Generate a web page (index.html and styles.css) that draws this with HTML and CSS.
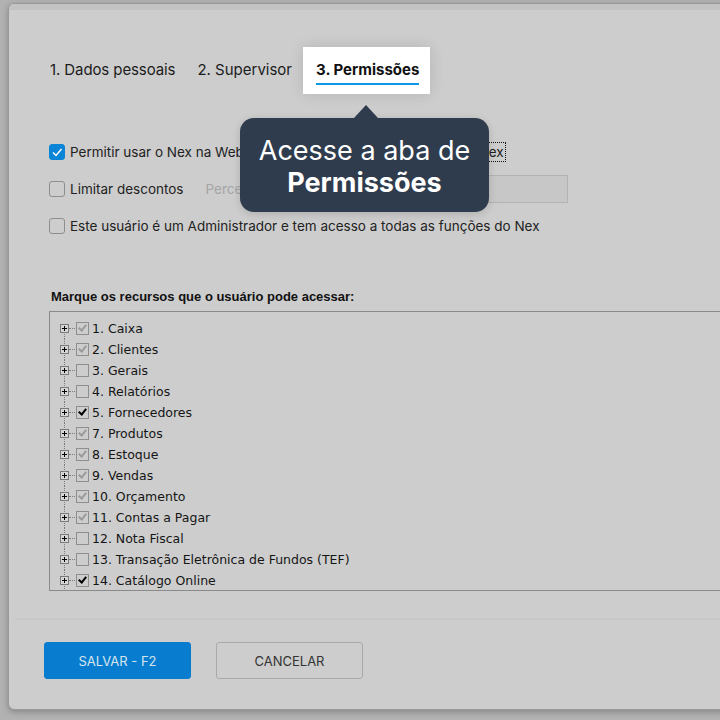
FILE: index.html
```html
<!DOCTYPE html>
<html lang="pt-BR">
<head>
    <meta charset="utf-8">
    <title>Usuário - Permissões</title>
    <link rel="stylesheet" href="styles.css">
</head>
<body>
    <div class="dialog">
        <div class="dialog-top"></div>

        <nav class="tabs">
            <span class="tab">1. Dados pessoais</span>
            <span class="tab">2. Supervisor</span>
            <span class="tab active"><span class="tab-label">3. Permissões</span></span>
        </nav>

        <div class="options">
            <div class="opt">
                <span class="cb checked">
                    <svg viewBox="0 0 16 16" width="16" height="16"><polyline points="4,8.5 7,11.5 12.5,5" /></svg>
                </span>
                <span>Permitir usar o Nex na Web e também no aplicativo para celular <span class="focus">Nex</span></span>
            </div>
            <div class="opt opt-input">
                <span class="cb"></span>
                <span>Limitar descontos</span>
                <span class="muted">Percentual máximo permitido</span>
                <span class="field"></span>
            </div>
            <div class="opt">
                <span class="cb"></span>
                <span>Este usuário é um Administrador e tem acesso a todas as funções do Nex</span>
            </div>
        </div>

        <p class="tree-title">Marque os recursos que o usuário pode acessar:</p>

        <div class="tree">
            <ul>
                <li class="node"><i class="exp"></i><i class="box gray"></i>1. Caixa</li>
                <li class="node"><i class="exp"></i><i class="box gray"></i>2. Clientes</li>
                <li class="node"><i class="exp"></i><i class="box"></i>3. Gerais</li>
                <li class="node"><i class="exp"></i><i class="box"></i>4. Relatórios</li>
                <li class="node"><i class="exp"></i><i class="box black"></i>5. Fornecedores</li>
                <li class="node"><i class="exp"></i><i class="box gray"></i>7. Produtos</li>
                <li class="node"><i class="exp"></i><i class="box gray"></i>8. Estoque</li>
                <li class="node"><i class="exp"></i><i class="box gray"></i>9. Vendas</li>
                <li class="node"><i class="exp"></i><i class="box gray"></i>10. Orçamento</li>
                <li class="node"><i class="exp"></i><i class="box gray"></i>11. Contas a Pagar</li>
                <li class="node"><i class="exp"></i><i class="box"></i>12. Nota Fiscal</li>
                <li class="node"><i class="exp"></i><i class="box"></i>13. Transação Eletrônica de Fundos (TEF)</li>
                <li class="node"><i class="exp"></i><i class="box black"></i>14. Catálogo Online</li>
            </ul>
        </div>

        <div class="separator"></div>

        <footer class="actions">
            <button class="btn btn-primary">SALVAR - F2</button>
            <button class="btn btn-secondary">CANCELAR</button>
        </footer>
    </div>

    <!-- guia de primeiro acesso -->
    <div class="tip">
        Acesse a aba de<br><b>Permissões</b>
    </div>
</body>
</html>
```

FILE: styles.css
```css
* {
    margin: 0;
    padding: 0;
    box-sizing: border-box;
}

body {
    font-family: Inter, 'Noto Sans', sans-serif;
    background: #b2b2b2;
    color: #222;
    width: 720px;
    height: 720px;
    overflow: hidden;
    padding: 3px 0 0 8px;
}

.dialog {
    width: 760px;
    height: 707px;
    background: #cdcdcd;
    border: 1px solid #999;
    border-right: none;
    border-radius: 6px 0 0 6px;
    box-shadow: 0 2px 6px rgba(0, 0, 0, 0.25);
    overflow: hidden;
}

.dialog-top {
    height: 6px;
    background: #c3c3c3;
}

/* abas */
.tabs {
    display: flex;
    margin-top: 37px;
    padding-left: 30px;
    height: 47px;
}

.tab {
    font-size: 15px;
    line-height: 20px;
    padding: 13px 11px 0;
    color: #1c1c1c;
}

.tab:first-child {
    padding-right: 11px;
    letter-spacing: -0.1px;
}

.tab.active {
    position: relative;
    z-index: 2;
    background: #fff;
    padding: 13px 11px 9px 13px;
    font-weight: 700;
    color: #111;
    box-shadow: 0 0 14px rgba(0, 0, 0, 0.12);
}

.tab-label {
    display: block;
    padding-bottom: 3px;
    border-bottom: 2px solid #0b97e6;
}

/* opções */
.options {
    margin-top: 48px;
    padding-left: 40px;
    display: flex;
    flex-direction: column;
    gap: 13px;
}

.opt {
    display: flex;
    align-items: center;
    gap: 5px;
    height: 20px;
    font-size: 13.5px;
    white-space: nowrap;
}

.opt-input {
    height: 28px;
}

.cb {
    width: 16px;
    height: 16px;
    border: 1px solid #8e8e8e;
    border-radius: 3px;
    flex-shrink: 0;
    display: flex;
}

.cb.checked {
    background: #0a84d6;
    border-color: #0a84d6;
}

.cb svg {
    margin: -1px;
    fill: none;
    stroke: #fff;
    stroke-width: 1.4;
}

.focus {
    outline: 1px dotted #111;
    outline-offset: 1px;
}

.muted {
    color: #a5a5a5;
    margin-left: 17px;
}

.field {
    width: 150px;
    height: 28px;
    margin-left: auto;
    margin-right: 200px;
    background: #c7c7c7;
    border: 1px solid #b3b3b3;
}

/* árvore de recursos */
.tree-title {
    margin: 53px 0 0 42px;
    font-family: 'Liberation Sans', Arial, sans-serif;
    font-size: 13px;
    font-weight: 700;
    line-height: 16px;
    color: #111;
}

.tree {
    margin: 6px 0 0 40px;
    height: 280px;
    border: 1px solid #8a8a8a;
    overflow: hidden;
}

.tree ul {
    list-style: none;
    padding-top: 6px;
}

.node {
    display: flex;
    align-items: center;
    height: 21px;
    padding-left: 10px;
    font-family: 'DejaVu Sans', Verdana, sans-serif;
    font-size: 12.5px;
    color: #151515;
    background-image: repeating-linear-gradient(to bottom, #7c7c7c 0 1px, transparent 1px 2px);
    background-size: 1px 100%;
    background-position: 14px 0;
    background-repeat: no-repeat;
}

.node:first-child {
    background-position: 14px 10px;
}

.exp {
    position: relative;
    width: 9px;
    height: 9px;
    border: 1px solid #7a7a7a;
    background: #d6d6d6;
    margin-right: 7px;
}

/* sinal de + */
.exp::before {
    content: "";
    position: absolute;
    left: 1px;
    top: 3px;
    width: 5px;
    height: 1px;
    background: #000;
}

.exp::after {
    content: "";
    position: absolute;
    left: 3px;
    top: 1px;
    width: 1px;
    height: 5px;
    background: #000;
}

.box {
    position: relative;
    width: 13px;
    height: 13px;
    border: 1px solid #8e8e8e;
    margin-right: 3px;
}

/* linha pontilhada até a caixa */
.box::before {
    content: "";
    position: absolute;
    left: -8px;
    top: 5px;
    width: 6px;
    border-top: 1px dotted #7c7c7c;
}

.box.gray::after,
.box.black::after {
    content: "";
    position: absolute;
    left: 3px;
    top: 0;
    width: 3px;
    height: 6px;
    border: solid #9a9a9a;
    border-width: 0 2px 2px 0;
    transform: rotate(40deg);
}

.box.black::after {
    border-color: #000;
}

/* rodapé */
.separator {
    margin: 27px 0 0 6px;
    height: 2px;
    background: #c8c8c8;
}

.actions {
    display: flex;
    gap: 25px;
    margin-top: 22px;
    padding-left: 35px;
}

.btn {
    width: 147px;
    height: 37px;
    border-radius: 3px;
    font-family: Inter, 'Noto Sans', sans-serif;
    font-size: 13px;
    cursor: pointer;
}

.btn-primary {
    background: #087dcf;
    border: 1px solid #087dcf;
    color: #d6e4ee;
}

.btn-secondary {
    background: transparent;
    border: 1px solid #a9a9a9;
    color: #333;
}

/* balão de ajuda */
.tip {
    position: absolute;
    left: 240px;
    top: 118px;
    width: 249px;
    height: 94px;
    padding-top: 17px;
    background: #2e3c4d;
    border-radius: 14px;
    color: #fff;
    font-size: 27px;
    line-height: 32px;
    text-align: center;
    box-shadow: 0 2px 8px rgba(0, 0, 0, 0.15);
}

.tip::before {
    content: "";
    position: absolute;
    left: 114px;
    top: -13px;
    border-left: 12px solid transparent;
    border-right: 12px solid transparent;
    border-bottom: 13px solid #2e3c4d;
}
```
